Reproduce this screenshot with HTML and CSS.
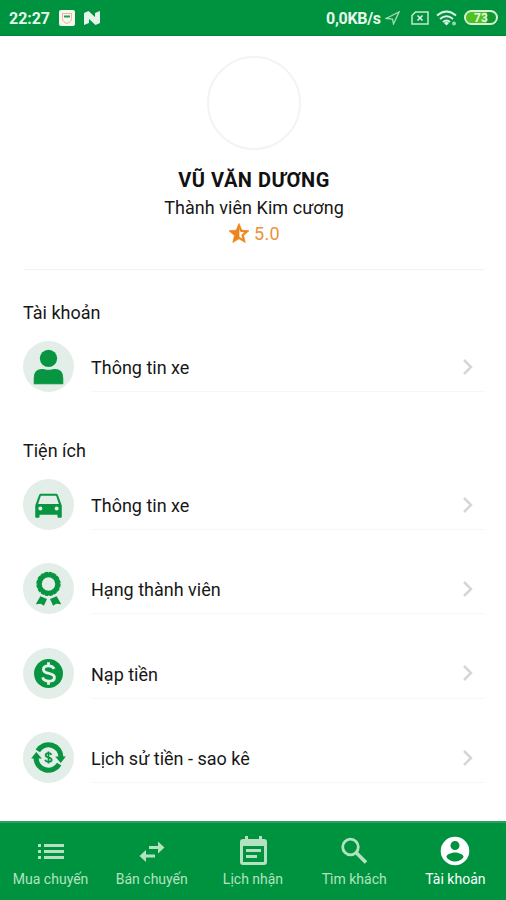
FILE: index.html
```html
<!DOCTYPE html>
<html lang="vi">
<head>
<meta charset="utf-8">
<title>Tài khoản</title>
<link rel="stylesheet" href="styles.css">
</head>
<body>
<div class="app">
  <header class="status">
    <span class="clock">22:27</span>
    <svg class="app-badge" viewBox="0 0 16 16"><rect width="16" height="16" rx="2" fill="#f5faec"/><path d="M3.500 3.500h9v5c0 2.500-2 4-4.500 5-2.500-1-4.500-2.500-4.500-5z" fill="none" stroke="#efb397"/><path d="M5 7.500V5.500h6v2z" fill="#269b55"/></svg>
    <svg class="n-badge" viewBox="0 0 16 14"><path d="M0 2 4.500 0 11 6V2L16 0v12l-4.500 2L5 8V12L0 14z" fill="#e3f5e9"/></svg>
    <span class="speed">0,0KB/s</span>
    <svg class="locate" viewBox="0 0 15 14"><path d="M1 7.500 14 1 8.500 13 7.500 8z" fill="none" stroke="#a5d9b7" stroke-width="1.300"/></svg>
    <svg class="sim" viewBox="0 0 18 14"><path d="M4.500 1H17v12H1V4.500z" fill="none" stroke="#c5e8d0" stroke-width="1.500"/><path d="m6.500 4.500 5 5m0-5-5 5" stroke="#e2f5e9" stroke-width="1.500"/></svg>
    <svg class="wifi" viewBox="0 0 22 16"><g fill="none" stroke="#dff4e6" stroke-width="2"><path d="M1 5.500q9.500-8 19 0M4 9q6.500-5.500 13 0M7 12q3.500-3 7 0"/></g><path d="m8 13 2.500-1.500L13 13l-2.500 2.500z" fill="#dff4e6"/><circle cx="18" cy="13.500" r="2" fill="#9ad6ad"/></svg>
    <span class="battery">73</span>
  </header>

  <main class="content">
    <section class="profile">
      <div class="avatar"></div>
      <h1 class="name">VŨ VĂN DƯƠNG</h1>
      <p class="tier">Thành viên Kim cương</p>
      <p class="rating">
        <svg class="star" viewBox="1 1 22 21"><path fill="#ed851b" d="M22 9.240 14.810 8.620 12 2 9.190 8.630 2 9.240l5.460 4.730L5.820 21 12 17.270 18.180 21l-1.630-7.030zM12 15.400V6.100l1.710 4.040 4.380.38-3.320 2.880 1 4.280z" stroke="#ed851b" stroke-width=".7"/></svg>
        <span>5.0</span>
      </p>
    </section>

    <section class="group">
      <h2 class="heading">Tài khoản</h2>
      <div class="row">
        <span class="disc"><svg viewBox="0 0 50 50"><circle cx="25" cy="17" r="8.500"/><path d="M11 42v-5.500c0-5.500 3-8.500 8-8.500 2.500 0 3.500.8 6 .8s3.500-.8 6-.8c5 0 8 3 8 8.500V42z" stroke-width="1" stroke="#079542" stroke-linejoin="round"/></svg></span>
        <span class="label">Thông tin xe</span>
        <svg class="chevron" viewBox="0 0 12 18"><path d="m2 2 7 7-7 7"/></svg>
      </div>
    </section>

    <section class="group">
      <h2 class="heading">Tiện ích</h2>
      <div class="row">
        <span class="disc"><svg viewBox="0 0 50 50"><path fill-rule="evenodd" d="M15.500 16.500c.5-1.500 1-2 2.500-2h14c1.500 0 2 .5 2.500 2L38 26v10.500c0 1-.3 1.500-1.200 1.500h-1.600c-1 0-1.400-.5-1.400-1.500V35H16.200v1.500c0 1-.4 1.500-1.400 1.500h-1.600c-.9 0-1.200-.5-1.200-1.500V26zm2-.2L14.800 24.500h20.400l-2.700-8.200zM17 31a2 2 0 1 0 0-4 2 2 0 0 0 0 4m16 0a2 2 0 1 0 0-4 2 2 0 0 0 0 4"/></svg></span>
        <span class="label">Thông tin xe</span>
        <svg class="chevron" viewBox="0 0 12 18"><path d="m2 2 7 7-7 7"/></svg>
      </div>
      <div class="row">
        <span class="disc"><svg viewBox="0 0 50 50"><circle cx="25" cy="20.500" r="8.900" fill="none" stroke="#079542" stroke-width="4.600"/><circle cx="25" cy="20.500" r="11.300" fill="none" stroke="#079542" stroke-width="1.300" stroke-dasharray="3.500 .940"/><path d="m17 32.500 6.500 2.700-3 6.800-3-2-5 .5zM33 32.500l-6.500 2.700 3 6.800 3-2 5 .5z"/></svg></span>
        <span class="label">Hạng thành viên</span>
        <svg class="chevron" viewBox="0 0 12 18"><path d="m2 2 7 7-7 7"/></svg>
      </div>
      <div class="row">
        <span class="disc"><svg viewBox="0 0 50 50"><circle cx="25" cy="25" r="14.200"/><path d="M30.500 20.500c-1-2.200-3-3-5.500-3-3 0-5 1.300-5 3.600 0 5.300 10.800 2.300 10.800 7.700 0 2.400-2.300 3.700-5.500 3.700-3 0-5.300-1.200-6.100-3.700M25 14v4m0 14v4" fill="none" stroke="#e7f3ea" stroke-width="2.800"/></svg></span>
        <span class="label">Nạp tiền</span>
        <svg class="chevron" viewBox="0 0 12 18"><path d="m2 2 7 7-7 7"/></svg>
      </div>
      <div class="row">
        <span class="disc"><svg viewBox="0 0 50 50"><g fill="none" stroke="#079542" stroke-width="5"><path d="M14.500 18.500A12.200 12.200 0 0 1 37.200 25M35.500 31.500A12.200 12.200 0 0 1 12.800 25"/></g><path d="M31.500 24h10.500l-5 6.500zM8 26h10.500l-5.500-6.500z"/><path d="M28 22.500c-.6-1.300-1.600-1.700-3-1.700-1.600 0-2.800.7-2.800 2 0 3 5.900 1.500 5.900 4.400 0 1.400-1.300 2.100-3 2.100s-2.900-.7-3.300-2.100M25 19v12" fill="none" stroke="#079542" stroke-width="1.700"/></svg></span>
        <span class="label">Lịch sử tiền - sao kê</span>
        <svg class="chevron" viewBox="0 0 12 18"><path d="m2 2 7 7-7 7"/></svg>
      </div>
    </section>
  </main>

  <nav class="tabs">
    <div class="tab"><svg viewBox="0 0 30 30"><path d="M2 8h3v3H2zm6 0h20v3H8zM2 14h3v3H2zm6 0h20v3H8zM2 20h3v3H2zm6 0h20v3H8z"/></svg><span>Mua chuyến</span></div>
    <div class="tab"><svg viewBox="0 0 30 30"><path d="M21 5.500 27.500 11.500 21 17.500V13H12v-3h9zM9 14l-6.500 6L9 26v-4.500h9v-3H9z"/></svg><span>Bán chuyến</span></div>
    <div class="tab"><svg viewBox="0 0 30 30"><path fill-rule="evenodd" d="M7 0h3v3h11V0h3v3h2c2 0 3 1 3 3v20c0 2-1 3-3 3H5c-2 0-3-1-3-3V6c0-2 1-3 3-3h2zM5 10v16h21V10zm3 3h15v3H8zm0 6h11v3H8z"/></svg><span>Lịch nhận</span></div>
    <div class="tab"><svg viewBox="0 0 30 30"><circle cx="11.500" cy="11" r="7.800" fill="none" stroke="#b4e2c1" stroke-width="2.800"/><path d="m17 16.500 10 10" fill="none" stroke="#b4e2c1" stroke-width="3.500"/></svg><span>Tìm khách</span></div>
    <div class="tab active"><svg viewBox="0 0 30 30"><path fill-rule="evenodd" d="M15 .7a14.300 14.300 0 1 0 0 28.600A14.300 14.300 0 0 0 15 .7m0 4.300a4.500 4.500 0 1 1 0 9 4.500 4.500 0 0 1 0-9m0 20.500c-3.700 0-6.800-1.600-8.600-4.500 0-3 5.700-4.500 8.600-4.500s8.600 1.500 8.600 4.500c-1.800 2.900-4.900 4.500-8.600 4.500"/></svg><span>Tài khoản</span></div>
  </nav>
</div>
</body>
</html>
```
FILE: styles.css
```css
* { box-sizing: border-box; }
body { margin: 0; background: #fff; font-family: Roboto, "Noto Sans", sans-serif; color: #171717; }
svg { display: block; flex: none; }
h1, h2, p { margin: 0; font-weight: 400; }
span { white-space: nowrap; }
.app { width: 506px; height: 900px; display: flex; flex-direction: column; overflow: hidden; }

.status { height: 36px; flex: none; display: flex; align-items: center; padding: 0 8px 0 9px; background: #00933f; border-bottom: 1px solid #008538; color: #e6f7eb; }
.clock { width: 50px; font-size: 16px; font-weight: 700; letter-spacing: -.05px; padding-top: 2px; }
.app-badge { width: 16px; height: 16px; }
.n-badge { width: 16px; height: 14px; margin-left: 9px; }
.speed { margin-left: auto; font-size: 16px; font-weight: 700; letter-spacing: -.3px; width: 55px; padding-top: 2px; }
.locate { width: 15px; height: 14px; margin-left: 4px; }
.sim { width: 18px; height: 14px; margin-left: 11px; }
.wifi { width: 22px; height: 16px; margin-left: 7px; }
.battery { width: 34px; height: 15px; margin-left: 6px; border: 2px solid #d8f2cf; border-radius: 8px; background: linear-gradient(90deg, #4fc21d 70%, #119834 70%); background-clip: padding-box; font-size: 12px; font-weight: 700; line-height: 12px; text-align: center; }

.content { flex: 1; padding: 20px 21px 0 23px; }
.profile { height: 214px; display: flex; flex-direction: column; align-items: center; border-bottom: 1px solid #f3f3f3; }
.avatar { width: 94px; height: 94px; border: 2px solid #f3f3f3; border-radius: 50%; }
.name { font-size: 20px; font-weight: 700; line-height: 26px; margin-top: 17px; letter-spacing: .55px; color: #111; }
.tier { font-size: 18px; line-height: 24px; margin-top: 3px; letter-spacing: .05px; }
.rating { display: flex; align-items: center; gap: 4px; margin-top: 1px; height: 24px; color: #ed913a; font-size: 18px; letter-spacing: .3px; }
.star { width: 22px; height: 22px; }

.heading { font-size: 18px; line-height: 24px; margin-top: 31px; margin-bottom: 16px; }
.group + .group .heading { margin-top: 47px; }
.row { height: 51px; display: flex; align-items: center; }
.row + .row { margin-top: 33.400px; }
.disc { width: 51px; height: 51px; flex: none; border-radius: 50%; background: #e4eee8; }
.disc svg { width: 51px; height: 51px; fill: #079542; }
.label { flex: 1; align-self: stretch; margin-left: 17px; font-size: 18px; line-height: 53px; border-bottom: 1px solid #f7f7f7; }
.chevron { width: 12px; height: 18px; margin: 0 11px 0 -23px; fill: none; stroke: #d6d6d6; stroke-width: 2.500; }

.tabs { height: 79px; flex: none; display: grid; grid-template-columns: repeat(5, 1fr); background: #00933f; border-top: 2px solid #2b9f5e; padding-top: 13px; }
.tab { display: flex; flex-direction: column; align-items: center; color: #b4e2c1; fill: #b4e2c1; font-size: 14px; line-height: 18px; gap: 4px; }
.tab svg { width: 30px; height: 30px; }
.active { color: #fff; fill: #fff; }
```
